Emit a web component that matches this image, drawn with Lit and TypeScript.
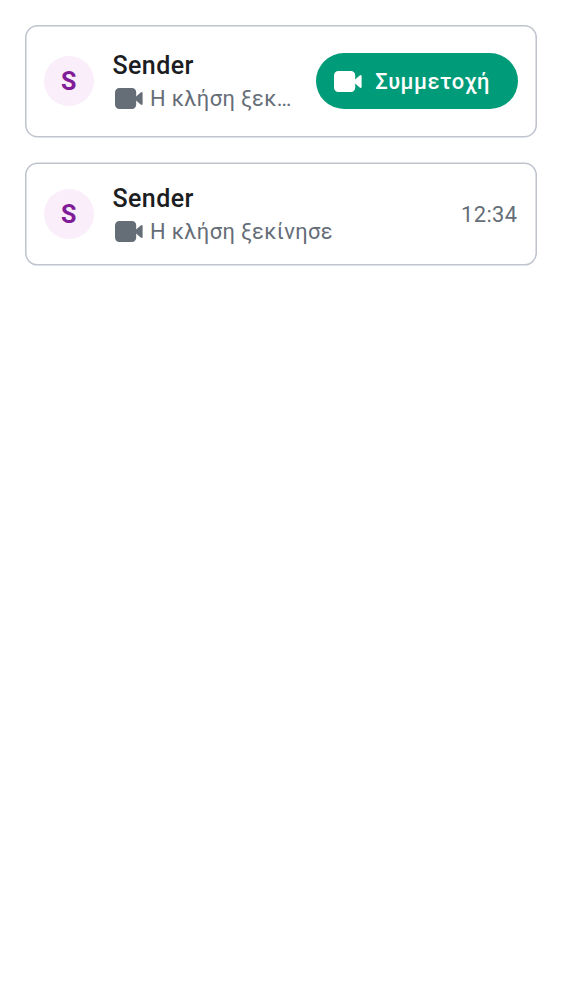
import { LitElement, html, css } from "lit";
import { customElement, property } from "lit/decorators.js";

@customElement("video-icon")
class VideoIcon extends LitElement {
  static styles = css`
    :host { display: block; width: 28px; height: 21px; flex: none; }
    svg { display: block; width: 100%; height: 100%; }
  `;
  render() {
    return html`<svg viewBox="0 0 28 21" fill="currentColor"><path d="M4.4 0H17a4.2 4.2 0 0 1 4.2 4.2v12.6A4.2 4.2 0 0 1 17 21H4.4A4.4 4.4 0 0 1 0 16.6V4.4A4.4 4.4 0 0 1 4.4 0Z"/><path d="M20.8 8.8 25.7 4.4Q27.6 3.2 27.6 5.2v10.6q0 2-1.9.8L20.8 12.2Z"/></svg>`;
  }
}

@customElement("call-card")
class CallCard extends LitElement {
  @property({ type: Boolean }) joinable = false;
  static styles = css`
    :host { display: block; }
    .card { position: relative; box-sizing: border-box; height: 102px; padding: 0 18.75px; display: flex; align-items: center; }
    .card.tall { height: 112px; }
    .outline { position: absolute; inset: 0; width: 100%; height: 100%; overflow: visible; pointer-events: none; fill: none; stroke: #bfc4ce; stroke-width: 1.5625px; }
    .avatar { width: 50px; height: 50px; flex: none; border-radius: 50%; background: #f9eefa; color: #801c98; font: 700 25px/51px Roboto, sans-serif; text-align: center; }
    .info { flex: 1; min-width: 0; margin-left: 18.75px; padding-top: 2px; }
    .name { font-size: 25px; line-height: 34px; font-weight: 500; color: #1b1d22; letter-spacing: .4px; }
    .status { display: flex; align-items: center; color: #656d77; font-size: 21.875px; line-height: 32px; letter-spacing: .39px; }
    .status video-icon { margin: 0 7px 2px 2.5px; }
    .text { overflow: hidden; text-overflow: ellipsis; white-space: nowrap; }
    .join { flex: none; box-sizing: border-box; width: 202px; height: 56px; margin-left: 22px; border: 0; border-radius: 28px; padding: 0 18px; background: #009b78; color: #fff; display: flex; align-items: center; gap: 13px; font: 500 21.875px/31px Roboto, sans-serif; letter-spacing: .5px; }
    .join span { padding-top: 1px; }
    .time { margin: 0 .8px 0 22px; font-size: 21.875px; letter-spacing: .39px; color: #656d77; }
  `;
  render() {
    const frame = this.joinable
      ? html`<svg class="outline" viewBox="0 0 512 112"><rect x=".78" y=".78" width="510.44" height="110.94" rx="11.7"/></svg>`
      : html`<svg class="outline" viewBox="0 0 512 102"><rect x=".78" y=".28" width="510.44" height="101.56" rx="11.7"/></svg>`;
    return html`<div class="card ${this.joinable ? "tall" : ""}">
      ${frame}
      <div class="avatar">S</div>
      <div class="info">
        <div class="name">Sender</div>
        <div class="status"><video-icon></video-icon><span class="text">Η κλήση ξεκίνησε</span></div>
      </div>
      ${this.joinable
        ? html`<button class="join"><video-icon></video-icon><span>Συμμετοχή</span></button>`
        : html`<span class="time">12:34</span>`}
    </div>`;
  }
}

@customElement("app-root")
class AppRoot extends LitElement {
  static styles = css`
    :host { box-sizing: border-box; display: flex; flex-direction: column; gap: 26px; min-height: 1000px; padding: 25px; background: #fff; font-family: Roboto, sans-serif; }
  `;
  render() {
    return html`<call-card joinable></call-card><call-card></call-card>`;
  }
}
